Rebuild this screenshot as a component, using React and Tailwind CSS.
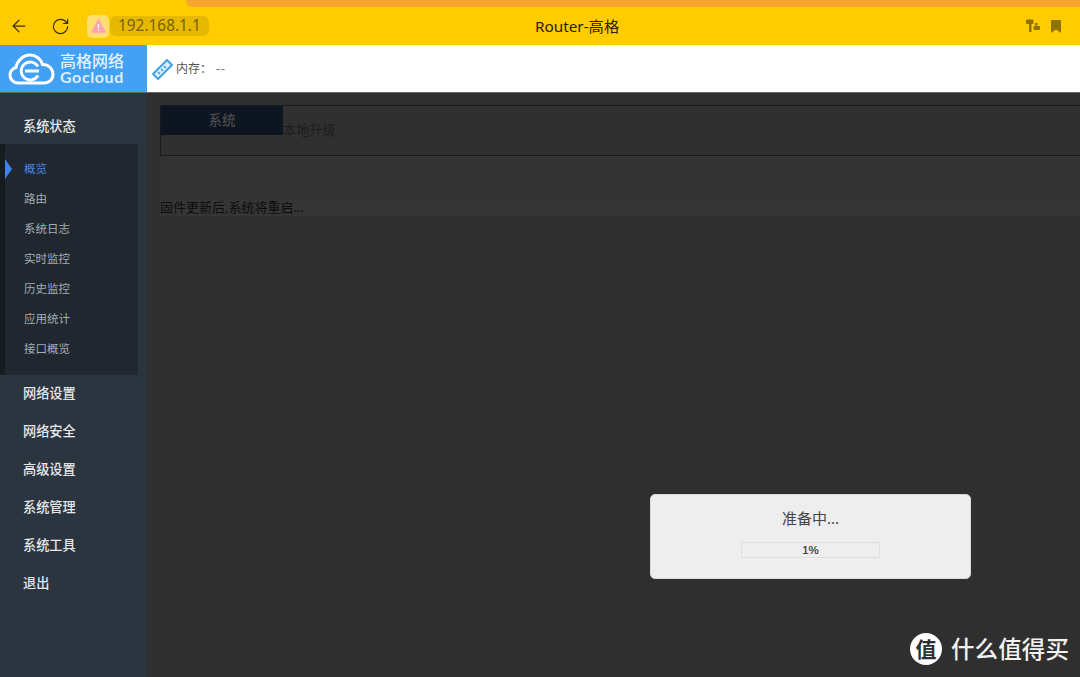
import { ArrowLeft, RotateCw } from "lucide-react";

const font = "font-['Noto_Sans','Noto_Sans_CJK_SC',sans-serif]";

const subItems = ["路由", "系统日志", "实时监控", "历史监控", "应用统计", "接口概览"];
const menus = ["网络设置", "网络安全", "高级设置", "系统管理", "系统工具", "退出"];

function TopBar() {
  return (
    <div className="h-[45px] bg-[#ffcc00] flex flex-col">
      <div className="h-[7px] ml-[186px] bg-[#f7a52c] rounded-bl-[6px]"></div>
      <div className="flex-1 flex items-center relative">
        <ArrowLeft className="w-[20px] h-[20px] ml-[9px] text-[#3a2f00]" strokeWidth={1.5} />
        <RotateCw className="w-[19px] h-[19px] ml-[22px] text-[#3a2f00]" strokeWidth={1.5} />
        <div className="w-[22px] h-[23px] ml-[17px] rounded-[5px] bg-[#ffdf70] flex items-center justify-center">
          <svg width="15" height="14" viewBox="0 0 15 14">
            <path d="M7.500 1 L14 13 L1 13 Z" fill="#ffa3ad" stroke="#ffa3ad" strokeWidth="1.500" strokeLinejoin="round" />
            <path d="M7.500 5v4M7.500 10.500v1.200" stroke="#fff" strokeWidth="1.300" />
          </svg>
        </div>
        <div className="h-[20px] ml-[1px] px-[8px] rounded-[6px] bg-[#e6b800] text-[#7a6200] text-[15.400px] leading-[20px]">
          192.168.1.1
        </div>
        <div className="absolute left-[535px] top-0 h-full flex items-center text-[15.300px] text-[#2a2200]">Router-高格</div>
        <div className="ml-auto flex items-center mr-[19px] gap-[11px] text-[#8f7400]">
          <svg width="14" height="14" viewBox="0 0 14 14" fill="currentColor">
            <path d="M0 1.500Q0 .5 1 .5h5.500q1 0 1 1v2.500q0 1-1 1H5.500v8H3v-8H1q-1 0-1-1z" />
            <rect x="9" y="4" width="2.500" height="2.500" />
            <rect x="7.500" y="7" width="6.500" height="4" rx="1" />
          </svg>
          <svg width="10" height="13" viewBox="0 0 10 13" fill="currentColor">
            <path d="M0 1Q0 0 1 0h8q1 0 1 1v12L5 9.500 0 13z" />
          </svg>
        </div>
      </div>
    </div>
  );
}

function Logo() {
  return (
    <div className="w-[147px] h-full bg-[#42a0f5] flex items-center pl-[8px] text-white">
      <svg width="47" height="32" viewBox="0 0 47 32" fill="none" stroke="white" strokeWidth="3">
        <path d="M10 30C5 30 2 26 2 22c0-4 3-7 6-7.500C9 8 15 2 22 2c6 0 11 4 12.500 9.500C41 11.500 45 16 45 21.500 45 26.500 41 30 36 30z" />
        <path d="M30 13.500A9 9 0 1 0 30 22.500" strokeWidth="2.800" />
        <path d="M17 18h14" strokeWidth="3" />
      </svg>
      <div className="ml-[5px] mt-[1px] flex flex-col items-start">
        <span className="text-[16px] leading-[16px] font-medium text-[#e4f2ff]">高格网络</span>
        <span className="text-[16px] leading-[16px] font-bold tracking-[0.6px] text-[#dcefff] font-['Lato',sans-serif]">Gocloud</span>
      </div>
    </div>
  );
}

function Sidebar() {
  return (
    <div className="w-[147px] shrink-0 bg-[#2b3540] flex flex-col">
      <div className="h-[51px] pl-[23px] pt-[23px] text-[13.200px] leading-[20px] font-medium text-[#e6e8ea]">系统状态</div>
      <div className="w-[138px] h-[231px] bg-[#20272e] border-l-[5px] border-[#171c20] pt-[10px]">
        <div className="h-[30px] flex items-center relative pl-[19px] text-[11.500px] text-[#4a86e0]">
          <span className="absolute left-0 top-[5px] w-0 h-0 border-y-[10px] border-y-transparent border-l-[7px] border-l-[#3f83ea]"></span>
          概览
        </div>
        {subItems.map((item) => (
          <div key={item} className="h-[30px] flex items-center pl-[19px] text-[11.500px] text-[#a3adb8]">
            {item}
          </div>
        ))}
      </div>
      <div>
        {menus.map((item) => (
          <div key={item} className="h-[38px] pl-[23px] flex items-center text-[13.200px] font-medium text-[#e6e8ea]">
            {item}
          </div>
        ))}
      </div>
    </div>
  );
}

function Content() {
  return (
    <div className="flex-1 bg-[#2f2f2f] pt-[12px] pl-[13px] relative">
      <div className="h-[51px] border border-[#141a22] border-r-0 bg-[#303030]">
        <div className="flex items-start">
          <div className="w-[122px] h-[29px] bg-[#0c1520] text-[13.500px] font-medium text-[#4a4a4a] flex items-center justify-center">
            系统
          </div>
          <div className="text-[13.200px] text-[#1d1d1d] mt-[13px] leading-[22px]">本地升级</div>
        </div>
      </div>
      <div className="h-[42px] bg-[#333333]"></div>
      <div className="h-[18px] bg-[#353535] text-[13px] leading-[19px] text-[#0d0d0d]">固件更新后,系统将重启...</div>

      {/* dialog */}
      <div className="absolute left-[503px] top-[401px] w-[321px] h-[85px] rounded-[5px] bg-[#eeeeee] border border-[#d8d8d8] flex flex-col items-center">
        <div className="mt-[11px] h-[24px] text-[15px] leading-[24px] text-[#444]">准备中...</div>
        <div className="mt-[12px] w-[139px] h-[16px] border border-[#dedede] bg-[#eeeeee] text-center font-['Liberation_Sans',sans-serif] text-[11.500px] leading-[14px] text-[#333] [-webkit-text-stroke:0.2px_#333]">
          1%
        </div>
      </div>

      {/* watermark */}
      <div className="absolute left-[763px] top-[540px] flex items-center text-white">
        <div className="w-[32px] h-[32px] rounded-full bg-white text-[#2f2f2f] flex items-center justify-center text-[21px] font-bold leading-none">
          值
        </div>
        <div className="ml-[9px] text-[23.500px] leading-[32px] tracking-[0.1px] font-medium text-[#f2f2f2]">什么值得买</div>
      </div>
    </div>
  );
}

export default function App() {
  return (
    <div className={`w-[1080px] h-[677px] overflow-hidden flex flex-col ${font}`}>
      <TopBar />
      <div className="h-[48px] bg-white flex items-center border-b border-[#666] shrink-0">
        <Logo />
        <svg className="ml-[5px] mt-[1px]" width="21" height="21" viewBox="0 0 21 21" fill="none">
          <path d="M1 15 L15 1 L20 6 L6 20 Z" fill="#d8eefc" stroke="#3d9fe6" strokeWidth="1.800" strokeLinejoin="round" />
          <path d="M6 13l2 2M9 10l2 2M12 7l2 2" stroke="#3d9fe6" strokeWidth="1.500" />
        </svg>
        <span className="ml-[3px] mt-[1px] text-[12px] text-[#555]">内存：</span>
        <span className="text-[12px] mt-[1px] text-[#777] ml-[4px] tracking-[1px]">--</span>
      </div>
      <div className="flex-1 flex min-h-0">
        <Sidebar />
        <Content />
      </div>
    </div>
  );
}
